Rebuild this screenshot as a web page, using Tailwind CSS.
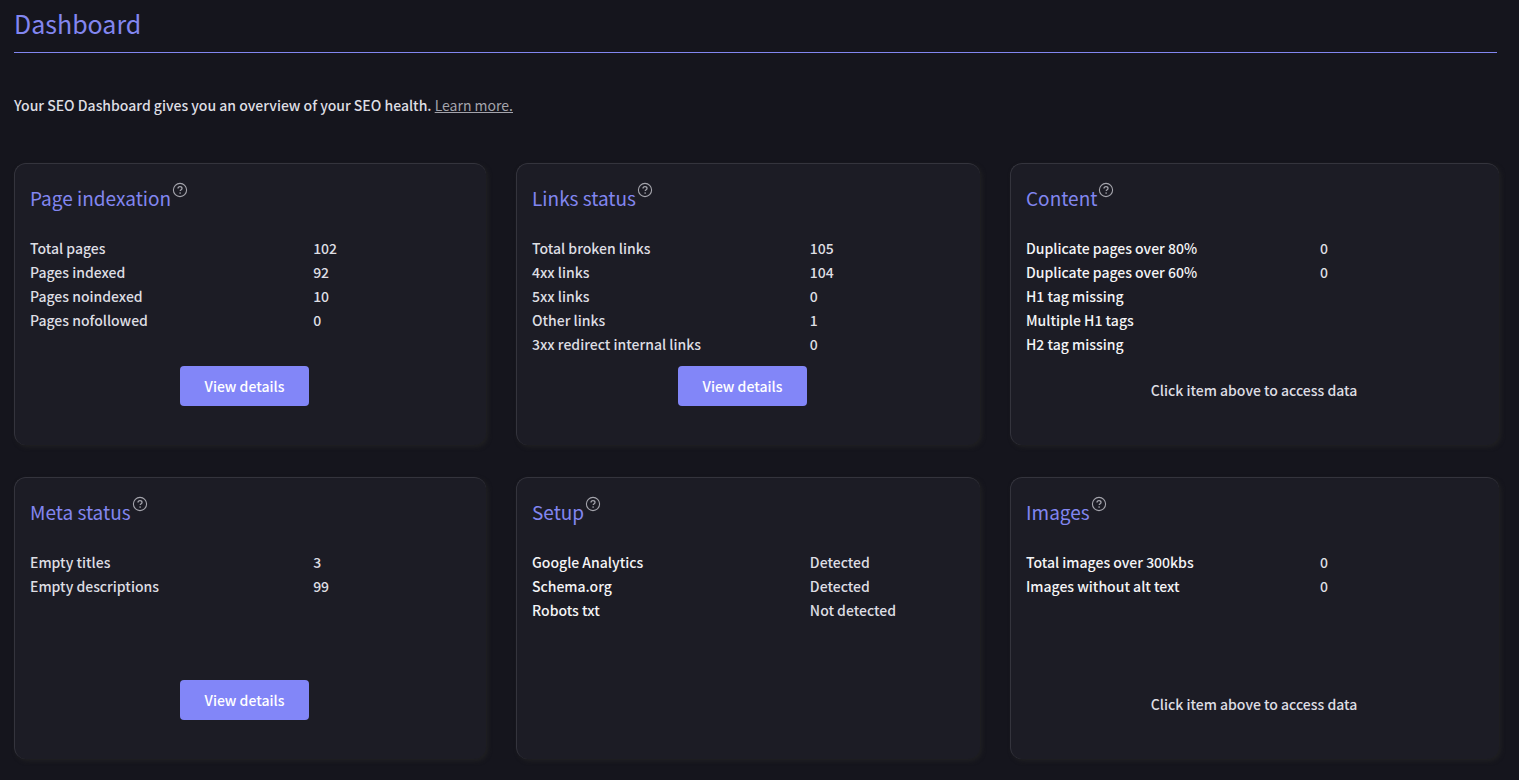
<!DOCTYPE html>
<html lang="en">
<head>
<meta charset="utf-8">
<meta name="viewport" content="width=device-width, initial-scale=1">
<title>Dashboard</title>
<script src="https://cdn.jsdelivr.net/npm/@tailwindcss/browser@4"></script>
</head>
<body class="min-h-screen bg-[#15151d] font-['Noto_Sans_CJK_SC','Source_Sans_Pro',sans-serif] text-sm leading-6 font-medium text-[#dedee3]">
<svg class="hidden" aria-hidden="true">
  <symbol id="help" viewBox="0 0 16 16">
    <circle cx="8" cy="8" r="6.6" fill="none" stroke="currentColor" stroke-width="1.1"/>
    <path d="M6 6.6C6 5.4 6.9 4.7 8 4.7s2 .7 2 1.7c0 1.3-1.8 1.4-1.8 2.7" fill="none" stroke="currentColor" stroke-width="1.3"/>
    <circle cx="8.1" cy="11.1" r=".8" fill="currentColor"/>
  </symbol>
</svg>
<main class="pr-5 pb-5 pl-3.5">
  <header class="mr-0.5 h-[53px] border-b border-[#8286f0] pt-1">
    <h1 class="text-[25px] leading-[38px] font-normal text-[#8286f0]">Dashboard</h1>
  </header>
  <p class="pt-10">Your SEO Dashboard gives you an overview of your SEO health. <a href="#" class="font-normal text-[#a4a4ac] underline">Learn more.</a></p>

  <div class="mt-[46px] grid grid-cols-[472fr_464fr_489fr] gap-x-[30px] gap-y-8">
    <section class="flex h-[282px] flex-col rounded-xl border-t border-l border-[#34343d] bg-[#1c1c25] pt-4 pr-[27px] pl-[15px] shadow-[2px_2px_4px_#202022]">
      <div class="flex gap-px">
        <h2 class="text-[19px] leading-9 font-normal text-[#8286f0]">Page indexation</h2>
        <button type="button" aria-label="About page indexation" class="mt-0.5 size-4 text-[#a4a4ac]"><svg class="size-4"><use href="#help"/></svg></button>
      </div>
      <div class="mt-5 h-[130px]">
        <table class="w-full table-fixed text-left">
          <tbody>
            <tr><th scope="row" class="w-[66%] p-0 font-medium">Total pages</th><td class="p-0">102</td></tr>
            <tr><th scope="row" class="p-0 font-medium">Pages indexed</th><td class="p-0">92</td></tr>
            <tr><th scope="row" class="p-0 font-medium">Pages noindexed</th><td class="p-0">10</td></tr>
            <tr><th scope="row" class="p-0 font-medium">Pages nofollowed</th><td class="p-0">0</td></tr>
          </tbody>
        </table>
      </div>
      <button type="button" class="h-10 self-center rounded bg-[#8286f8] px-[25px] text-white">View details</button>
    </section>

    <section class="flex h-[282px] flex-col rounded-xl border-t border-l border-[#34343d] bg-[#1c1c25] pt-4 pr-[27px] pl-[15px] shadow-[2px_2px_4px_#202022]">
      <div class="flex gap-px">
        <h2 class="text-[19px] leading-9 font-normal text-[#8286f0]">Links status</h2>
        <button type="button" aria-label="About links status" class="mt-0.5 size-4 text-[#a4a4ac]"><svg class="size-4"><use href="#help"/></svg></button>
      </div>
      <div class="mt-5 h-[130px]">
        <table class="w-full table-fixed text-left">
          <tbody>
            <tr><th scope="row" class="w-[66%] p-0 font-medium">Total broken links</th><td class="p-0">105</td></tr>
            <tr><th scope="row" class="p-0 font-medium">4xx links</th><td class="p-0">104</td></tr>
            <tr><th scope="row" class="p-0 font-medium">5xx links</th><td class="p-0">0</td></tr>
            <tr><th scope="row" class="p-0 font-medium">Other links</th><td class="p-0">1</td></tr>
            <tr><th scope="row" class="p-0 font-medium">3xx redirect internal links</th><td class="p-0">0</td></tr>
          </tbody>
        </table>
      </div>
      <button type="button" class="h-10 self-center rounded bg-[#8286f8] px-[25px] text-white">View details</button>
    </section>

    <section class="flex h-[282px] flex-col rounded-xl border-t border-l border-[#34343d] bg-[#1c1c25] pt-4 pr-[17px] pl-[15px] shadow-[2px_2px_4px_#202022]">
      <div class="flex gap-px">
        <h2 class="text-[19px] leading-9 font-normal text-[#8286f0]">Content</h2>
        <button type="button" aria-label="About content" class="mt-0.5 size-4 text-[#a4a4ac]"><svg class="size-4"><use href="#help"/></svg></button>
      </div>
      <div class="mt-5 h-[130px]">
        <table class="w-full table-fixed text-left">
          <tbody>
            <tr><th scope="row" class="w-[294px] p-0 font-medium text-[#f4f4f6]"><a href="#">Duplicate pages over 80%</a></th><td class="p-0">0</td></tr>
            <tr><th scope="row" class="p-0 font-medium text-[#f4f4f6]"><a href="#">Duplicate pages over 60%</a></th><td class="p-0">0</td></tr>
            <tr><th scope="row" class="p-0 font-medium text-[#f4f4f6]"><a href="#">H1 tag missing</a></th><td class="p-0"></td></tr>
            <tr><th scope="row" class="p-0 font-medium text-[#f4f4f6]"><a href="#">Multiple H1 tags</a></th><td class="p-0"></td></tr>
            <tr><th scope="row" class="p-0 font-medium text-[#f4f4f6]"><a href="#">H2 tag missing</a></th><td class="p-0"></td></tr>
          </tbody>
        </table>
      </div>
      <p class="pt-3 text-center">Click item above to access data</p>
    </section>

    <section class="flex h-[282px] flex-col rounded-xl border-t border-l border-[#34343d] bg-[#1c1c25] pt-4 pr-[27px] pl-[15px] shadow-[2px_2px_4px_#202022]">
      <div class="flex gap-px">
        <h2 class="text-[19px] leading-9 font-normal text-[#8286f0]">Meta status</h2>
        <button type="button" aria-label="About meta status" class="mt-0.5 size-4 text-[#a4a4ac]"><svg class="size-4"><use href="#help"/></svg></button>
      </div>
      <div class="mt-5 h-[130px]">
        <table class="w-full table-fixed text-left">
          <tbody>
            <tr><th scope="row" class="w-[66%] p-0 font-medium">Empty titles</th><td class="p-0">3</td></tr>
            <tr><th scope="row" class="p-0 font-medium">Empty descriptions</th><td class="p-0">99</td></tr>
          </tbody>
        </table>
      </div>
      <button type="button" class="h-10 self-center rounded bg-[#8286f8] px-[25px] text-white">View details</button>
    </section>

    <section class="flex h-[282px] flex-col rounded-xl border-t border-l border-[#34343d] bg-[#1c1c25] pt-4 pr-[27px] pl-[15px] shadow-[2px_2px_4px_#202022]">
      <div class="flex gap-px">
        <h2 class="text-[19px] leading-9 font-normal text-[#8286f0]">Setup</h2>
        <button type="button" aria-label="About setup" class="mt-0.5 size-4 text-[#a4a4ac]"><svg class="size-4"><use href="#help"/></svg></button>
      </div>
      <div class="mt-5 h-[130px]">
        <table class="w-full table-fixed text-left">
          <tbody>
            <tr><th scope="row" class="w-[66%] p-0 font-medium text-[#f4f4f6]"><a href="#">Google Analytics</a></th><td class="p-0">Detected</td></tr>
            <tr><th scope="row" class="p-0 font-medium text-[#f4f4f6]"><a href="#">Schema.org</a></th><td class="p-0">Detected</td></tr>
            <tr><th scope="row" class="p-0 font-medium text-[#f4f4f6]"><a href="#">Robots txt</a></th><td class="p-0">Not detected</td></tr>
          </tbody>
        </table>
      </div>
    </section>

    <section class="flex h-[282px] flex-col rounded-xl border-t border-l border-[#34343d] bg-[#1c1c25] pt-4 pr-[17px] pl-[15px] shadow-[2px_2px_4px_#202022]">
      <div class="flex gap-px">
        <h2 class="text-[19px] leading-9 font-normal text-[#8286f0]">Images</h2>
        <button type="button" aria-label="About images" class="mt-0.5 size-4 text-[#a4a4ac]"><svg class="size-4"><use href="#help"/></svg></button>
      </div>
      <div class="mt-5 h-[130px]">
        <table class="w-full table-fixed text-left">
          <tbody>
            <tr><th scope="row" class="w-[294px] p-0 font-medium text-[#f4f4f6]"><a href="#">Total images over 300kbs</a></th><td class="p-0">0</td></tr>
            <tr><th scope="row" class="p-0 font-medium text-[#f4f4f6]"><a href="#">Images without alt text</a></th><td class="p-0">0</td></tr>
          </tbody>
        </table>
      </div>
      <p class="pt-3 text-center">Click item above to access data</p>
    </section>
  </div>
</main>
</body>
</html>
